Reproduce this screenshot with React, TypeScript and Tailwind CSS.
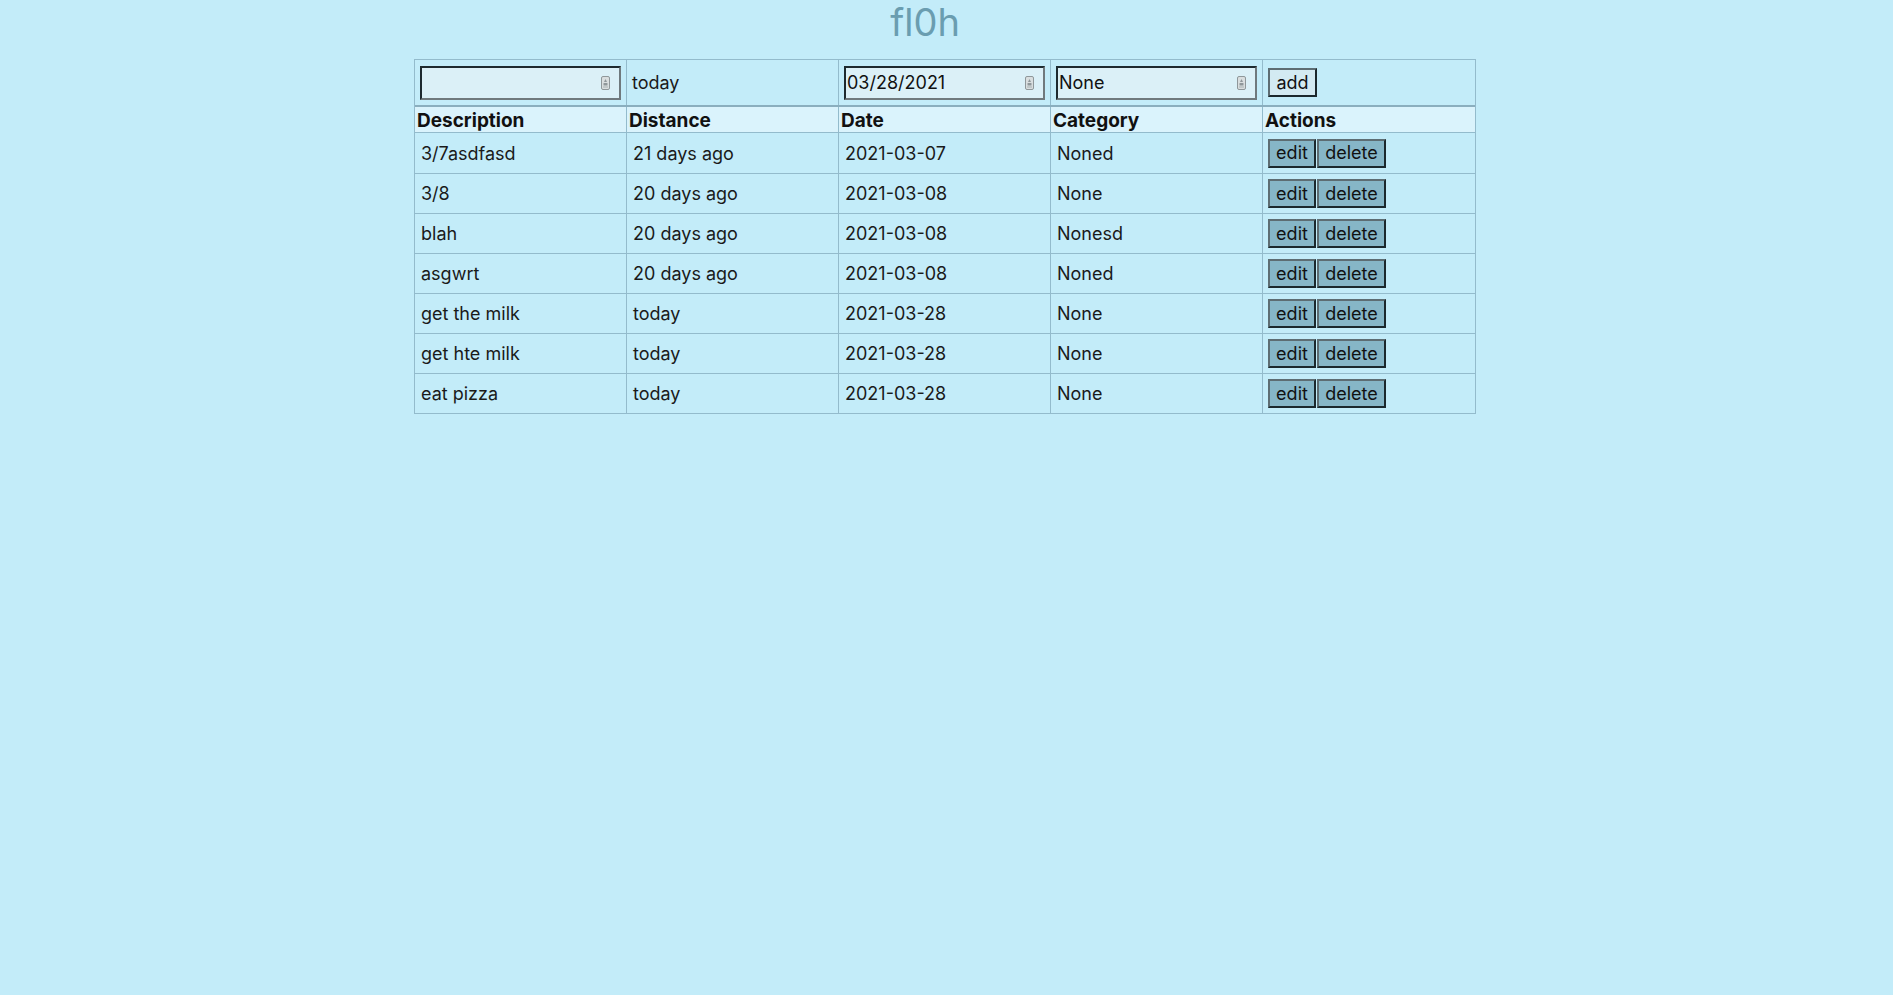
import React from "react";

type Todo = { description: string; distance: string; date: string; category: string };

const TODOS: Todo[] = [
  { description: "3/7asdfasd", distance: "21 days ago", date: "2021-03-07", category: "Noned" },
  { description: "3/8", distance: "20 days ago", date: "2021-03-08", category: "None" },
  { description: "blah", distance: "20 days ago", date: "2021-03-08", category: "Nonesd" },
  { description: "asgwrt", distance: "20 days ago", date: "2021-03-08", category: "Noned" },
  { description: "get the milk", distance: "today", date: "2021-03-28", category: "None" },
  { description: "get hte milk", distance: "today", date: "2021-03-28", category: "None" },
  { description: "eat pizza", distance: "today", date: "2021-03-28", category: "None" },
];

// little autofill glyph the browser puts at the right of each field
function FieldIcon() {
  return (
    <svg width="9" height="14" viewBox="0 0 9 14" className="shrink-0">
      <rect x="0.5" y="0.5" width="8" height="13" rx="1.5" fill="#d9dedf" stroke="#8f979a" />
      <path d="M4.5 3 L6 6 L3 6 Z" fill="#8f979a" />
      <rect x="2.5" y="7" width="4" height="2.5" rx="0.5" fill="#8f979a" />
      <rect x="2" y="10.5" width="5" height="1" fill="#aab1b3" />
    </svg>
  );
}

function Field({ value }: { value?: string }) {
  return (
    <div className="flex h-[34px] w-[201px] items-center border-2 border-t-[#1d2a2f] border-l-[#1d2a2f] border-r-[#6f797d] border-b-[#6f797d] bg-[#dbf0f7] pl-[1px] pr-[9px] text-[18px] text-[#111]">
      <span>{value}</span>
      <span className="ml-auto">
        <FieldIcon />
      </span>
    </div>
  );
}

const btn =
  "flex h-[29px] items-center justify-center border-2 border-t-[#5d6d73] border-l-[#5d6d73] border-r-[#1b282d] border-b-[#1b282d] text-[18px] leading-none text-[#111]";

export default function App() {
  return (
    <div className="min-h-screen bg-[#c3ecf9] pr-[3px] font-['Inter',sans-serif]">
      <h1 className="h-[59px] pr-[40px] text-center text-[38px] leading-[44px] font-normal text-[#6a9db0]">
        fl0h
      </h1>

      <div className="mx-auto w-[1062px] border border-[#93bbcc]">
        {/* new todo row */}
        <div className="grid h-[45px] grid-cols-5 divide-x divide-[#93bbcc] text-[18px] text-[#1a1a1a]">
          <div className="flex items-center pl-[5px]">
            <Field />
          </div>
          <div className="flex items-center pl-[5px]">today</div>
          <div className="flex items-center pl-[5px]">
            <Field value="03/28/2021" />
          </div>
          <div className="flex items-center pl-[5px]">
            <Field value="None" />
          </div>
          <div className="flex items-center pl-[5px]">
            <button type="button" className={`${btn} w-[49px] bg-[#d3eaf2]`}>
              add
            </button>
          </div>
        </div>

        {/* header */}
        <div className="grid h-[28px] grid-cols-5 divide-x divide-[#93bbcc] border-t-2 border-b border-t-[#8aaebe] border-b-[#93bbcc] bg-[#daf3fc] text-[19px] font-bold text-[#111]">
          {["Description", "Distance", "Date", "Category", "Actions"].map((h) => (
            <div key={h} className="flex items-center pl-[2px]">
              {h}
            </div>
          ))}
        </div>

        {TODOS.map((t, i) => (
          <div
            key={i}
            className={`grid h-[40px] grid-cols-5 divide-x divide-[#93bbcc] text-[18px] text-[#1a1a1a] ${
              i > 0 ? "border-t border-[#93bbcc]" : ""
            }`}
          >
            <div className="flex items-center pl-[6px]">{t.description}</div>
            <div className="flex items-center pl-[6px]">{t.distance}</div>
            <div className="flex items-center pl-[6px]">{t.date}</div>
            <div className="flex items-center pl-[6px]">{t.category}</div>
            <div className="flex items-center gap-[1px] pl-[5px]">
              <button type="button" className={`${btn} w-[48px] bg-[#86b6c7]`}>
                edit
              </button>
              <button type="button" className={`${btn} w-[69px] bg-[#86b6c7]`}>
                delete
              </button>
            </div>
          </div>
        ))}
      </div>
    </div>
  );
}
